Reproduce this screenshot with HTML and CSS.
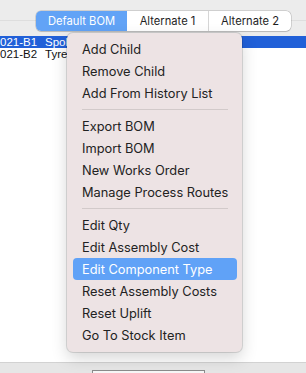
FILE: index.html
```html
<!DOCTYPE html>
<html>
<head>
<meta charset="utf-8">
<link rel="stylesheet" href="styles.css">
</head>
<body>
<div class="window">
  <div class="header">
    <div class="seg">
      <div class="seg-item seg-default selected">Default BOM</div>
      <div class="seg-item seg-alt1">Alternate 1</div>
      <div class="seg-item seg-alt2">Alternate 2</div>
    </div>
  </div>
  <div class="table">
    <div class="row selected-row"><span class="cell-code">021-B1</span><span class="cell-name">Spokes</span></div>
    <div class="row"><span class="cell-code">021-B2</span><span class="cell-name">Tyres</span></div>
  </div>
  <div class="footer">
    <div class="footer-box"></div>
  </div>
</div>
<div class="menu">
  <div class="item">Add Child</div>
  <div class="item">Remove Child</div>
  <div class="item">Add From History List</div>
  <div class="sep"></div>
  <div class="item">Export BOM</div>
  <div class="item">Import BOM</div>
  <div class="item">New Works Order</div>
  <div class="item">Manage Process Routes</div>
  <div class="sep"></div>
  <div class="item">Edit Qty</div>
  <div class="item">Edit Assembly Cost</div>
  <div class="item active">Edit Component Type</div>
  <div class="item">Reset Assembly Costs</div>
  <div class="item">Reset Uplift</div>
  <div class="item">Go To Stock Item</div>
</div>
</body>
</html>
```
FILE: styles.css
```css
html, body {
  margin: 0;
  padding: 0;
}
body {
  width: 306px;
  height: 373px;
  overflow: hidden;
  position: relative;
  font-family: "Inter", "Liberation Sans", sans-serif;
  color: #262626;
  background: #fff;
}
.window {
  display: flex;
  flex-direction: column;
  height: 373px;
}
.header {
  height: 36px;
  flex: none;
  background: linear-gradient(#ececec 0 20px, #dedede 20px 21px, #ececec 21px);
  padding: 11px 0 0 36px;
  box-sizing: border-box;
}
.seg {
  display: flex;
  width: 255px;
  height: 20px;
  background: #fff;
  border-radius: 5px;
  box-shadow: 0 0 0 0.5px rgba(0,0,0,0.22), 0 0.5px 1px rgba(0,0,0,0.12);
  font-size: 11.2px;
  line-height: 20px;
  text-align: center;
  color: #1e1e1e;
}
.seg-item {
  box-sizing: border-box;
}
.seg-default { width: 91px; }
.seg-alt1 { width: 81px; }
.seg-alt2 { width: 83px; border-left: 1px solid #d6d6d6; }
.seg-item.selected {
  background: #62a3f6;
  color: #fff;
  border-radius: 5px 0 0 5px;
}
.table {
  flex: 1;
  background: #fff;
  font-family: "Liberation Sans", sans-serif;
  font-size: 11.5px;
}
.row {
  height: 12px;
  line-height: 12px;
  display: flex;
  white-space: nowrap;
  color: #111;
  overflow: hidden;
}
.selected-row {
  background: #2160d8;
  color: #fff;
}
.cell-code {
  width: 45px;
  flex: none;
  overflow: hidden;
}
.footer {
  height: 11px;
  flex: none;
  background: #e6e6e6;
  border-top: 1px solid #d2d2d2;
  box-sizing: border-box;
  padding: 7px 0 0 92px;
}
.footer-box {
  width: 111px;
  height: 10px;
  background: #f7f7f7;
  border: 1px solid #8c8c8c;
  border-bottom: none;
}
.menu {
  position: absolute;
  left: 67px;
  top: 33px;
  width: 175px;
  height: 319px;
  box-sizing: border-box;
  padding: 5px 0;
  background: #ede3e4;
  border-radius: 6px;
  box-shadow: 0 0 0 1px rgba(0,0,0,0.12), 0 6px 16px rgba(0,0,0,0.17);
  font-size: 12.8px;
}
.item {
  height: 22px;
  line-height: 23px;
  margin: 0 5px 0 6px;
  padding-left: 9px;
  border-radius: 4px;
  white-space: nowrap;
  color: #222;
}
.item.active {
  background: #60a2f7;
  color: #fff;
}
.sep {
  height: 1px;
  margin: 5px 14px 5px 15px;
  background: #d2caca;
}
```
